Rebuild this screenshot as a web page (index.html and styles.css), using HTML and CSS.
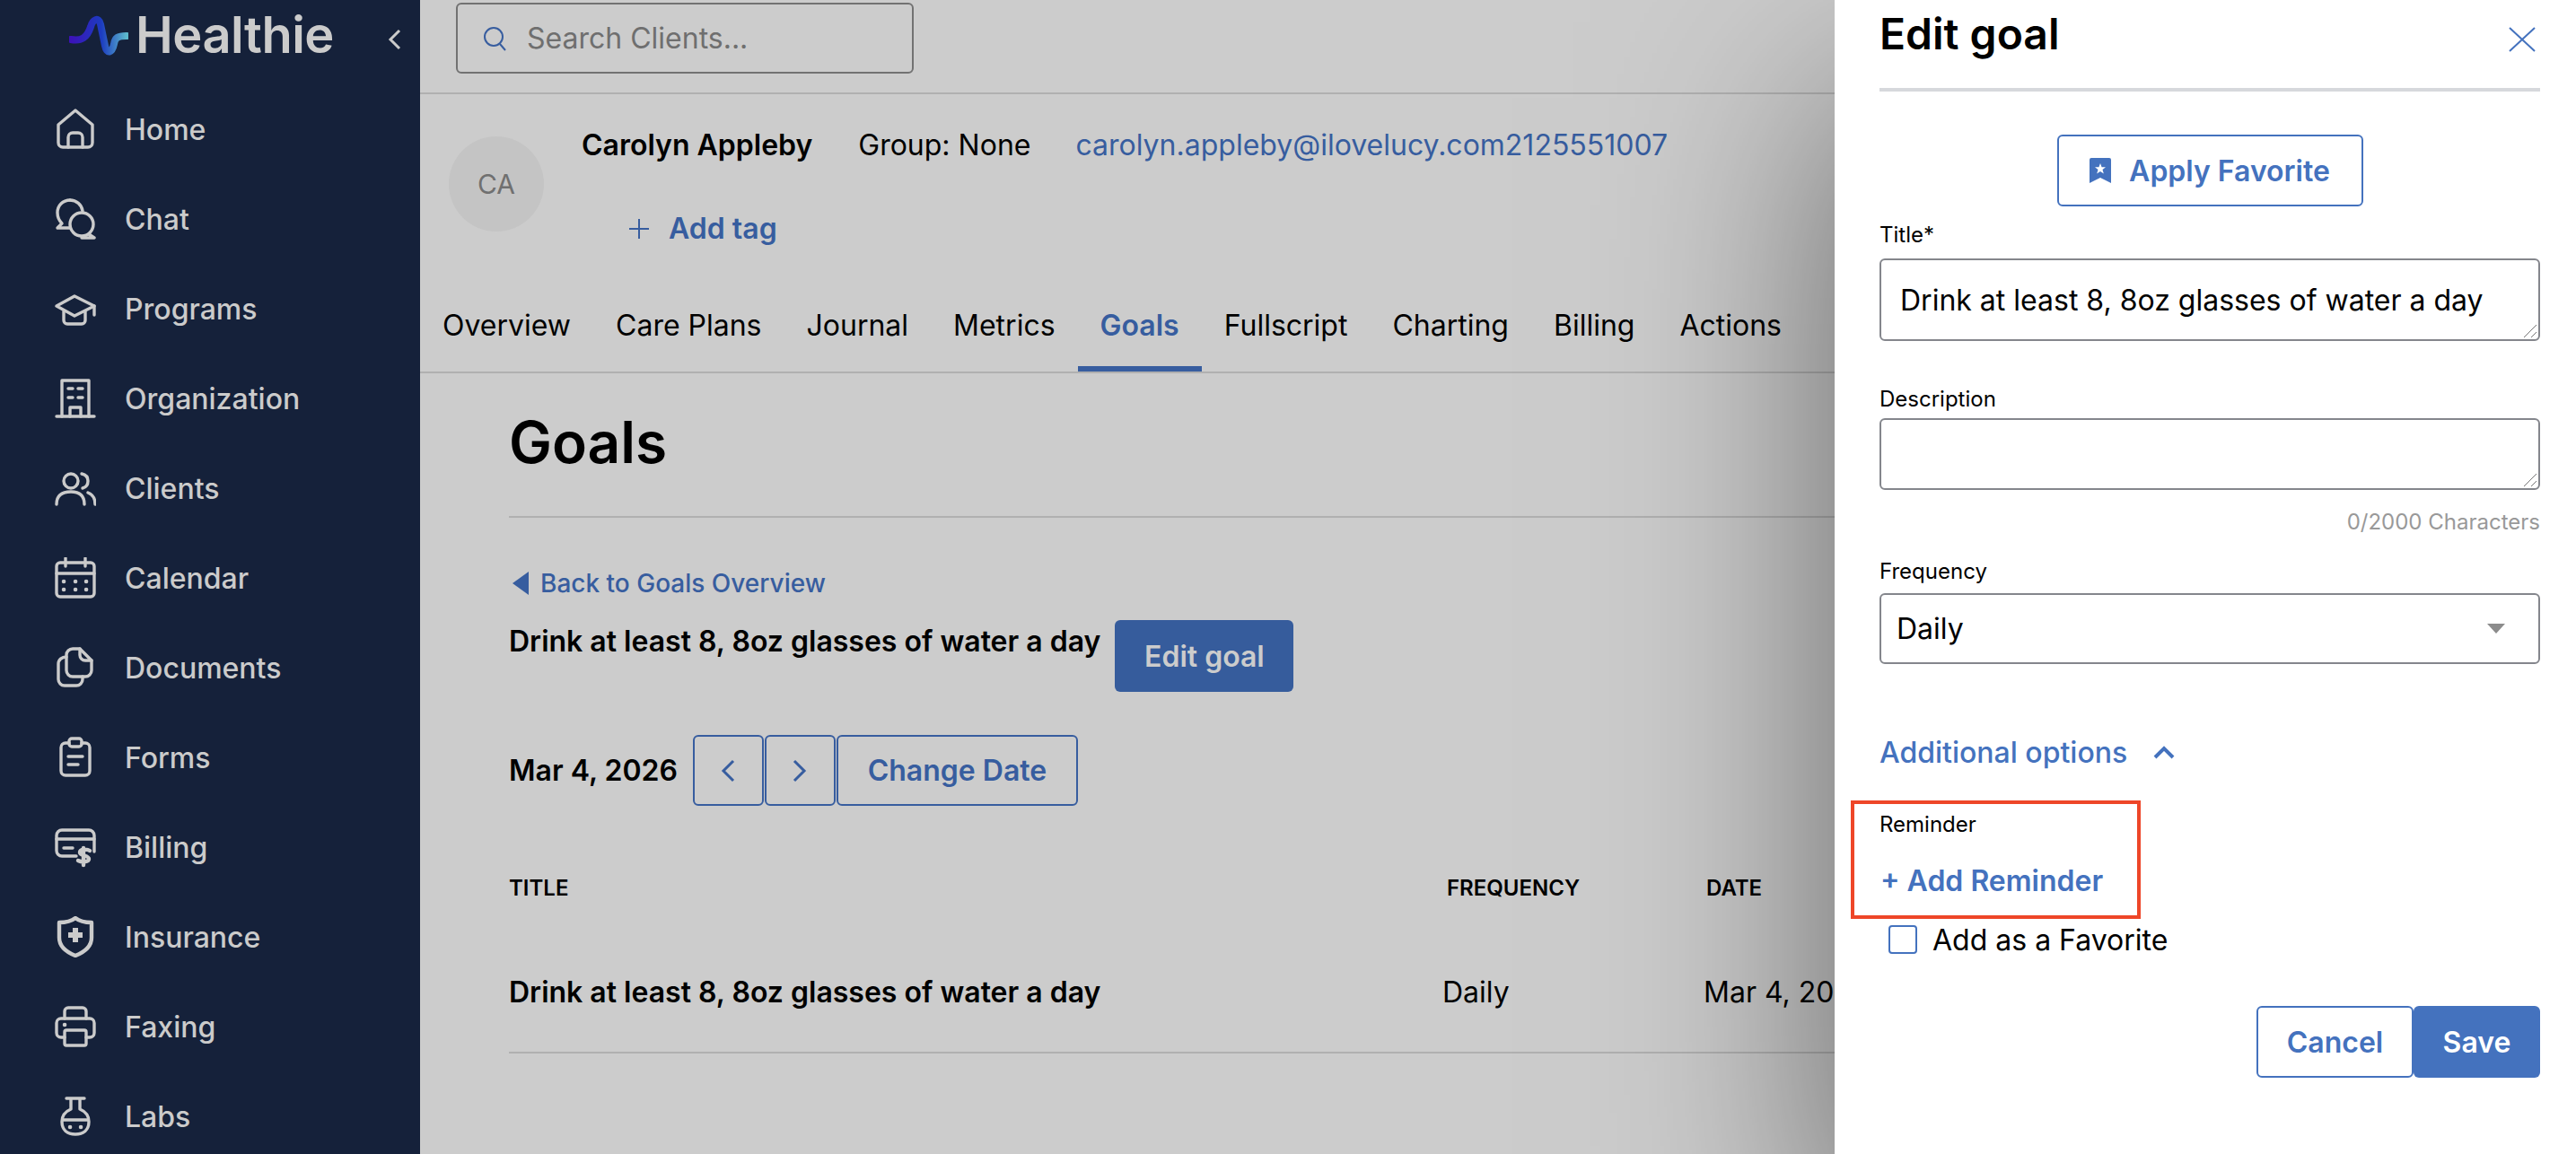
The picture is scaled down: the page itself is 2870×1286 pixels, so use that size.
FILE: index.html
```html
<!DOCTYPE html>
<html lang="en">
<head>
<meta charset="utf-8">
<title>Edit goal</title>
<link rel="stylesheet" href="styles.css">
</head>
<body>
<div class="app">
  <aside class="sidebar">
    <div class="brand">
      <svg class="brand-mark" width="66" height="50" viewBox="0 0 66 50" fill="none">
        <defs><linearGradient id="wave" x1="0" y1="0" x2="1" y2="0"><stop offset="0" stop-color="#3c12b8"/><stop offset=".55" stop-color="#1c3cc0"/><stop offset="1" stop-color="#5cb8cc"/></linearGradient></defs>
        <path d="M2 29C14 31 20 27 24 15C26 7 33 3 35 12L40 36C42 46 48 44 50 34C51 27 54 25 64 25" stroke="url(#wave)" stroke-width="8" stroke-linecap="round"/>
      </svg>
      <span class="brand-name">Healthie</span>
      <svg class="collapse" width="16" height="26" viewBox="0 0 16 26" fill="none"><path d="M13 3L3 13L13 23" stroke="#cbcbcb" stroke-width="3"/></svg>
    </div>
    <nav class="nav">
      <a class="nav-item"><svg class="nav-icon" viewBox="0 0 46 46"><path d="M4 18L23 2L42 18V38a5 5 0 0 1-5 5H9a5 5 0 0 1-5-5Z"/><path d="M15 43V32a5 5 0 0 1 5-5h6a5 5 0 0 1 5 5V43"/></svg><span>Home</span></a>
      <a class="nav-item"><svg class="nav-icon" viewBox="0 0 46 46"><path d="M17 2C9 2 3 8 3 16C3 21 5 25 8 28L3 33H17"/><path d="M17 2C24 2 30 7 31 14"/><circle cx="30" cy="29" r="13"/><path d="M38 40L44 44H30"/></svg><span>Chat</span></a>
      <a class="nav-item"><svg class="nav-icon" viewBox="0 0 46 46"><path d="M22 9L44 20L22 31L2 20Z"/><path d="M10 26V36a4 4 0 0 0 4 4H30a4 4 0 0 0 4-4V26"/><path d="M44 20V30"/></svg><span>Programs</span></a>
      <a class="nav-item"><svg class="nav-icon" viewBox="0 0 46 46"><path d="M8 43V3H38V43"/><path d="M2 43H44"/><path d="M17 43V33H29V43"/><path d="M15 12H20M26 12H31M15 22H20M26 22H31"/></svg><span>Organization</span></a>
      <a class="nav-item"><svg class="nav-icon" viewBox="0 0 46 46"><circle cx="18" cy="15" r="8"/><path d="M2 41C2 30 10 27 18 27C26 27 33 30 33 41"/><path d="M30 7C35 8 37 11 37 15C37 19 35 22 31 23"/><path d="M37 28C42 30 45 35 45 41"/></svg><span>Clients</span></a>
      <a class="nav-item"><svg class="nav-icon" viewBox="0 0 46 46"><rect x="2" y="6" width="42" height="38" rx="4"/><path d="M2 18H44M12 1V10M34 1V10"/><path class="dots" d="M10 27h.1M23 27h.1M35 27h.1M10 36h.1M23 36h.1M35 36h.1"/></svg><span>Calendar</span></a>
      <a class="nav-item"><svg class="nav-icon" viewBox="0 0 46 46"><path d="M20 2H28L41 15V26a7 7 0 0 1-7 7H20a7 7 0 0 1-7-7V9a7 7 0 0 1 7-7Z"/><path d="M13 11C8 11 4 14 4 19V36a7 7 0 0 0 7 7H24a7 7 0 0 0 7-7V33"/><path d="M28 2V9a6 6 0 0 0 6 6H41"/></svg><span>Documents</span></a>
      <a class="nav-item"><svg class="nav-icon" viewBox="0 0 46 46"><path d="M16 7H12a5 5 0 0 0-5 5V38a5 5 0 0 0 5 5H34a5 5 0 0 0 5-5V12a5 5 0 0 0-5-5H30"/><rect x="16" y="2" width="14" height="9" rx="3"/><path d="M15 22H31M15 31H26"/></svg><span>Forms</span></a>
      <a class="nav-item"><svg class="nav-icon" viewBox="0 0 46 46"><path d="M24 33H8a6 6 0 0 1-6-6V10a6 6 0 0 1 6-6H38a6 6 0 0 1 6 6V28"/><path d="M2 14H44M10 24H20"/><path class="thick" d="M39 27C36 25 28 25 28 29C28 33 38 32 38 36C38 40 30 40 26 38M32 24V43"/></svg><span>Billing</span></a>
      <a class="nav-item"><svg class="nav-icon" viewBox="0 0 46 46"><path class="thick" d="M23 2C28 6 35 7 41 7V24C41 34 33 40 23 44C13 40 5 34 5 24V7C11 7 18 6 23 2Z"/><path class="solid" d="M20 13H26V18H31V24H26V29H20V24H15V18H20Z"/></svg><span>Insurance</span></a>
      <a class="nav-item"><svg class="nav-icon" viewBox="0 0 46 46"><path d="M11 14V6a4 4 0 0 1 4-4H31a4 4 0 0 1 4 4V14"/><path d="M11 35H7a5 5 0 0 1-5-5V19a5 5 0 0 1 5-5H39a5 5 0 0 1 5 5V30a5 5 0 0 1-5 5H35"/><rect x="11" y="27" width="24" height="17" rx="2"/><path class="dots" d="M11 21h.1"/></svg><span>Faxing</span></a>
      <a class="nav-item"><svg class="nav-icon" viewBox="0 0 46 46"><path d="M13 3H33M18 3V15C11 18 8 23 8 29C8 38 14 43 23 43C32 43 38 38 38 29C38 23 35 18 28 15V3"/><path d="M9 27H37"/><path class="dots" d="M17 35h.1M29 35h.1"/></svg><span>Labs</span></a>
    </nav>
  </aside>

  <main class="main">
    <header class="topbar">
      <div class="search">
        <svg width="28" height="28" viewBox="0 0 28 28" fill="none"><circle cx="12" cy="12" r="10" stroke="#375d9f" stroke-width="2"/><path d="M19 20L25 27" stroke="#375d9f" stroke-width="2"/></svg>
        <span>Search Clients...</span>
      </div>
      <div class="topbar-right">
        <svg width="40" height="26" viewBox="0 0 40 26" fill="none"><path d="M3 6L17 22L37 3" stroke="#2f5492" stroke-width="6"/></svg>
      </div>
    </header>

    <section class="client">
      <div class="avatar">CA</div>
      <div class="client-info">
        <div class="client-line">
          <span class="client-name">Carolyn Appleby</span>
          <span class="client-group">Group: None</span>
          <span class="client-contact">carolyn.appleby@ilovelucy.com2125551007</span>
        </div>
        <div class="add-tag">
          <svg width="22" height="22" viewBox="0 0 22 22" fill="none"><path d="M11 0V22M0 11H22" stroke="#375d9f" stroke-width="2"/></svg>
          <span>Add tag</span>
        </div>
      </div>
    </section>

    <nav class="tabs">
      <a class="tab">Overview</a>
      <a class="tab">Care Plans</a>
      <a class="tab">Journal</a>
      <a class="tab">Metrics</a>
      <a class="tab tab-active">Goals</a>
      <a class="tab">Fullscript</a>
      <a class="tab">Charting</a>
      <a class="tab">Billing</a>
      <a class="tab">Actions</a>
    </nav>

    <section class="content">
      <h1 class="page-title">Goals</h1>
      <a class="back"><svg width="18" height="26" viewBox="0 0 18 26"><path d="M18 0V26L0 13Z" fill="#375d9f"/></svg><span>Back to Goals Overview</span></a>
      <div class="goal-head">
        <span class="goal-name">Drink at least 8, 8oz glasses of water a day</span>
        <button class="btn-solid-dim">Edit goal</button>
      </div>
      <div class="date-row">
        <span class="date">Mar 4, 2026</span>
        <button class="btn-outline-dim btn-icon"><svg width="16" height="26" viewBox="0 0 16 26" fill="none"><path d="M14 2L3 13L14 24" stroke="#375d9f" stroke-width="3"/></svg></button>
        <button class="btn-outline-dim btn-icon"><svg width="16" height="26" viewBox="0 0 16 26" fill="none"><path d="M2 2L13 13L2 24" stroke="#375d9f" stroke-width="3"/></svg></button>
        <button class="btn-outline-dim btn-text">Change Date</button>
      </div>
      <div class="table">
        <div class="thead">
          <span>TITLE</span><span class="th-freq">FREQUENCY</span><span class="th-date">DATE</span>
        </div>
        <div class="trow">
          <span class="td-title">Drink at least 8, 8oz glasses of water a day</span><span>Daily</span><span>Mar 4, 2026</span>
        </div>
      </div>
    </section>
  </main>

  <aside class="drawer">
    <div class="drawer-head">
      <h2>Edit goal</h2>
      <svg width="30" height="28" viewBox="0 0 30 28" fill="none"><path d="M1 1L29 27M29 1L1 27" stroke="#4472be" stroke-width="2"/></svg>
    </div>
    <div class="favorite-row">
      <button class="btn-outline btn-favorite">
        <svg width="24" height="28" viewBox="0 0 24 28"><path d="M0 2a2 2 0 0 1 2-2H22a2 2 0 0 1 2 2V28L12 22L0 28Z" fill="#4472be"/><path d="M12 6L13.6 10.2H18L14.5 13L15.8 17.4L12 14.9L8.2 17.4L9.5 13L6 10.2H10.4Z" fill="#fff"/></svg>
        <span>Apply Favorite</span>
      </button>
    </div>
    <label class="field-label label-title">Title*</label>
    <div class="input input-title">Drink at least 8, 8oz glasses of water a day
      <svg class="grip" width="16" height="16" viewBox="0 0 16 16" fill="none"><path d="M15 1L1 15M15 9L9 15" stroke="#777" stroke-width="1"/></svg>
    </div>
    <label class="field-label label-desc">Description</label>
    <div class="input input-desc">
      <svg class="grip" width="16" height="16" viewBox="0 0 16 16" fill="none"><path d="M15 1L1 15M15 9L9 15" stroke="#777" stroke-width="1"/></svg>
    </div>
    <div class="counter">0/2000 Characters</div>
    <label class="field-label label-freq">Frequency</label>
    <div class="input input-select">
      <span>Daily</span>
      <svg width="20" height="11" viewBox="0 0 20 11"><path d="M0 0H20L10 11Z" fill="#8c8c8c"/></svg>
    </div>
    <div class="options-toggle">
      <span>Additional options</span>
      <svg width="24" height="15" viewBox="0 0 24 15" fill="none"><path d="M2 13L12 3L22 13" stroke="#4472be" stroke-width="4"/></svg>
    </div>
    <div class="reminder">
      <div class="callout"></div>
      <div class="field-label">Reminder</div>
      <div class="add-reminder">+ Add Reminder</div>
    </div>
    <div class="favorite-check">
      <span class="checkbox"></span>
      <span>Add as a Favorite</span>
    </div>
    <div class="actions">
      <button class="btn-outline btn-cancel">Cancel</button>
      <button class="btn-solid">Save</button>
    </div>
  </aside>
</div>
</body>
</html>
```
FILE: styles.css
```css
* { box-sizing: border-box; }
html, body { margin: 0; height: 100%; overflow: hidden; }
body { font-family: Inter, "Liberation Sans", sans-serif; color: #000; background: #ccc; }
button { font-family: inherit; }
.app { position: relative; display: flex; width: 2870px; height: 1286px; overflow: hidden; }

.sidebar { flex: 0 0 468px; background: #15213a; color: #cbcbcb; }
.brand { display: flex; align-items: center; height: 84px; padding-left: 77px; }
.brand-mark { flex: none; margin-right: 8px; margin-top: -4px; }
.brand-name { font-size: 56px; font-weight: 600; line-height: 1; color: #cbcbcb; margin-top: -7px; letter-spacing: -0.5px; }
.collapse { margin-left: 60px; margin-top: 4px; }
.nav { display: flex; flex-direction: column; padding-top: 10px; }
.nav-item { display: flex; align-items: center; gap: 32px; height: 100px; padding-left: 61px; font-size: 32px; font-weight: 500; }
.nav-icon { flex: none; width: 46px; height: 46px; fill: none; stroke: #cbcbcb; stroke-width: 3.4; stroke-linejoin: round; stroke-linecap: round; }
.nav-icon .dots { stroke-width: 4.5; }
.nav-icon .thick { stroke-width: 4.4; }
.nav-icon .solid { fill: #cbcbcb; stroke: none; }

.main { flex: 1; min-width: 0; display: flex; flex-direction: column; background: #ccc; }
.topbar { flex: none; display: flex; justify-content: space-between; height: 105px; padding: 3px 0 0 40px; border-bottom: 2px solid #b0b0b0; }
.search { display: flex; align-items: center; gap: 21px; width: 510px; height: 79px; padding-left: 28px; border: 2px solid #727272; border-radius: 6px; font-size: 32px; color: #6f6f6f; }
.topbar-right { width: 448px; margin-top: -3px; padding: 33px 0 0 46px; border-left: 2px solid #b0b0b0; }

.client { flex: none; display: flex; height: 206px; padding: 47px 0 0 32px; }
.avatar { flex: none; display: flex; align-items: center; justify-content: center; width: 106px; height: 106px; border-radius: 50%; background: #c4c4c4; color: #707070; font-size: 30px; }
.client-info { margin-left: 42px; }
.client-line { display: flex; align-items: center; height: 32px; margin-top: -7px; font-size: 32px; }
.client-name { font-weight: 600; }
.client-group { margin-left: 51px; }
.client-contact { margin-left: 50px; color: #375d9f; }
.add-tag { display: flex; align-items: center; gap: 22px; margin: 58px 0 0 53px; font-size: 32px; font-weight: 600; color: #375d9f; }

.tabs { flex: none; display: flex; height: 105px; border-bottom: 2px solid #b0b0b0; }
.tab { display: flex; align-items: center; height: 103px; padding: 0 25px; font-size: 32px; }
.tab-active { color: #375d9f; font-weight: 600; border-bottom: 6px solid #375d9f; padding-top: 6px; }

.content { flex: 1; padding: 0 0 0 99px; }
.page-title { margin: 0; height: 161px; padding-top: 37px; border-bottom: 2px solid #b0b0b0; font-size: 64px; line-height: 80px; font-weight: 600; }
.back { display: flex; align-items: center; gap: 13px; margin: 60px 0 0 4px; height: 26px; font-size: 28px; font-weight: 500; color: #375d9f; }
.goal-head { display: flex; align-items: flex-start; gap: 16px; margin-top: 28px; }
.goal-name { font-size: 32px; font-weight: 600; line-height: 48px; }
.btn-solid-dim { width: 199px; height: 80px; border: 0; border-radius: 6px; background: #365c9c; color: #ccc; font-size: 32px; font-weight: 600; }
.date-row { display: flex; align-items: center; margin-top: 48px; height: 79px; }
.date { font-size: 32px; font-weight: 600; margin-right: 17px; }
.btn-outline-dim { height: 79px; background: transparent; border: 2px solid #375d9f; border-radius: 6px; color: #375d9f; font-size: 32px; font-weight: 600; }
.btn-icon { display: flex; align-items: center; justify-content: center; width: 79px; margin-right: 1px; }
.btn-text { width: 269px; }
.table { margin-top: 72px; }
.thead { display: grid; grid-template-columns: 1040px 291px 1fr; font-size: 24px; font-weight: 600; line-height: 40px; }
.th-freq { padding-left: 5px; }
.th-date { padding-left: 3px; }
.trow { display: grid; grid-template-columns: 1040px 291px 1fr; align-items: center; height: 136px; margin-top: 28px; padding-top: 0; border-bottom: 2px solid #b0b0b0; font-size: 32px; }
.td-title { font-weight: 600; }

.drawer { position: absolute; top: 0; right: 0; bottom: 0; width: 826px; padding: 0 40px 0 50px; background: #fff; box-shadow: 0 110px 240px rgba(0,0,0,.5); }
.drawer-head { display: flex; justify-content: space-between; height: 102px; border-bottom: 4px solid #d6d8dc; }
.drawer-head h2 { margin: 9px 0 0; font-size: 48px; line-height: 58px; font-weight: 600; }
.drawer-head svg { margin: 30px 5px 0 0; }
.favorite-row { display: flex; justify-content: center; margin-top: 48px; }
.btn-outline { background: #fff; border: 2px solid #4472be; border-radius: 6px; color: #4472be; font-size: 32px; font-weight: 600; }
.btn-favorite { display: flex; align-items: center; gap: 20px; justify-content: center; width: 341px; height: 80px; }
.field-label { display: block; font-size: 24px; line-height: 30px; }
.label-title { margin-top: 17px; }
.input { position: relative; display: flex; align-items: center; width: 736px; border: 2px solid #84868c; border-radius: 6px; font-size: 32px; }
.input-title { height: 92px; margin-top: 11px; padding-left: 21px; }
.input-desc { height: 80px; margin-top: 6px; }
.grip { position: absolute; right: 1px; bottom: 1px; }
.label-desc { margin-top: 50px; }
.counter { margin-top: 21px; text-align: right; font-size: 24px; line-height: 30px; color: #999; }
.label-freq { margin-top: 25px; }
.input-select { justify-content: space-between; height: 79px; margin-top: 9px; padding: 0 37px 0 17px; }
.options-toggle { display: flex; align-items: center; gap: 29px; margin-top: 78px; font-size: 32px; font-weight: 500; color: #4472be; height: 40px; }
.reminder { position: relative; margin-top: 34px; height: 128px; padding-top: 12px; }
.callout { position: absolute; left: -32px; top: 0; width: 323px; height: 132px; border: 4px solid #ee4628; }
.add-reminder { margin-top: 28px; font-size: 32px; line-height: 40px; font-weight: 600; color: #4472be; padding-left: 1px; }
.favorite-check { display: flex; align-items: center; gap: 17px; margin: 10px 0 0 10px; font-size: 32px; height: 34px; }
.checkbox { width: 32px; height: 32px; border: 2px solid #4472be; border-radius: 4px; }
.actions { display: flex; justify-content: flex-end; margin-top: 57px; }
.btn-cancel { width: 175px; height: 80px; }
.btn-solid { width: 141px; height: 80px; border: 0; border-radius: 6px; background: #4472be; color: #fff; font-size: 32px; font-weight: 600; }
```
